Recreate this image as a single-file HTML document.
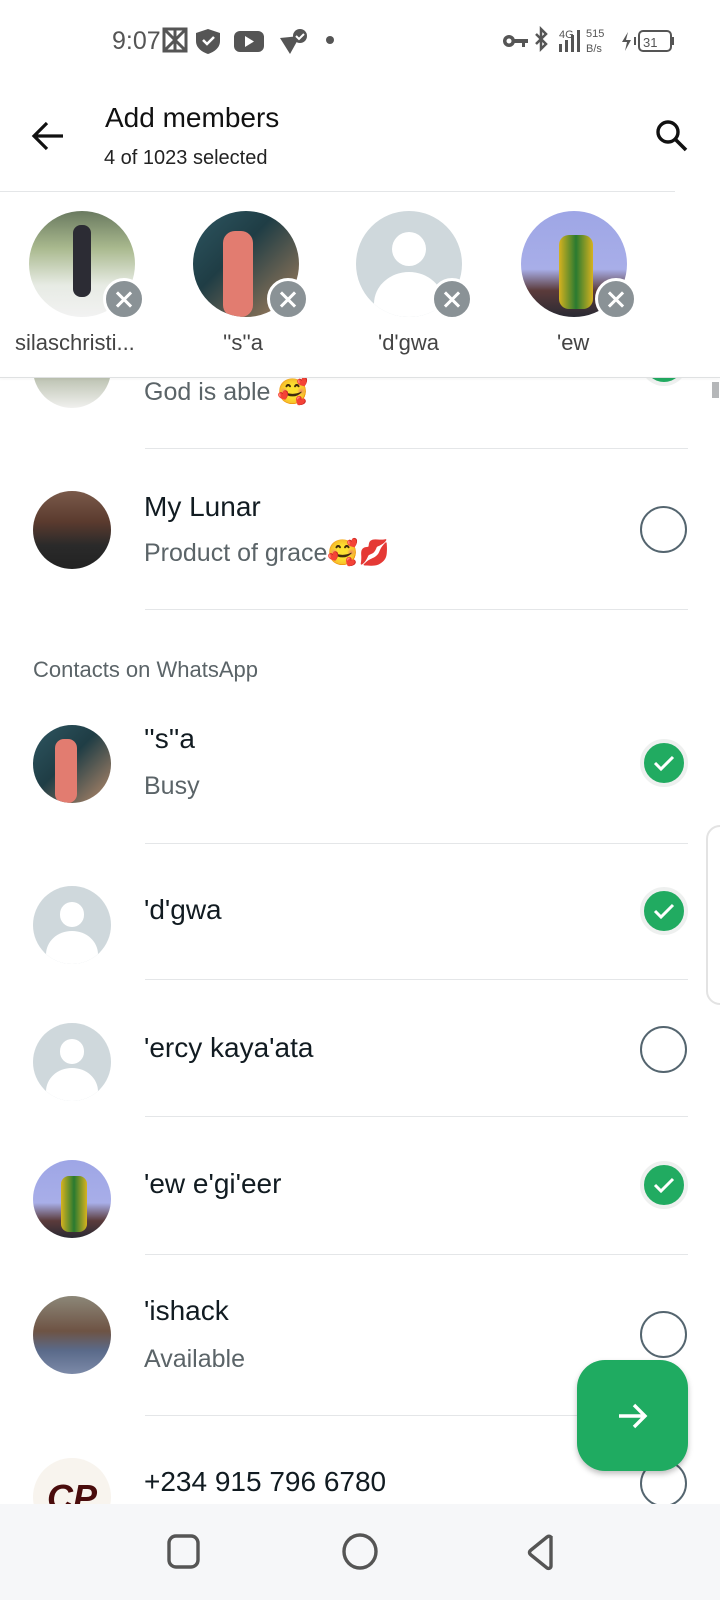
<!DOCTYPE html>
<html><head><meta charset="utf-8"><style>
*{margin:0;padding:0;box-sizing:border-box}
body{width:720px;height:1600px;background:#fff;position:relative;overflow:hidden;font-family:"Liberation Sans",sans-serif;color:#111b21}
.a{position:absolute}
.t{position:absolute;white-space:nowrap;line-height:1}
.av{position:absolute;border-radius:50%;overflow:hidden}
.def{background:#cfd8dc}
.def:before{content:"";position:absolute;left:34%;top:20%;width:32%;height:32%;border-radius:50%;background:#fff}
.def:after{content:"";position:absolute;left:17%;top:58%;width:66%;height:60%;border-radius:50% 50% 0 0;background:#fff}
.rm{position:absolute;width:42px;height:42px;border-radius:50%;background:#8a9296;border:3px solid #fff}
.rm:before,.rm:after{content:"";position:absolute;left:8px;top:16.5px;width:20px;height:3px;background:#fff;transform:rotate(45deg)}
.rm:after{transform:rotate(-45deg)}
.hr{position:absolute;height:1px;background:#e4e6e8}
.nm{font-size:28px;color:#111b21}
.st{font-size:25px;color:#5b6468}
.rc{position:absolute;width:47px;height:47px;border-radius:50%;border:2px solid #54656f}
.ck{position:absolute;width:48px;height:48px;border-radius:50%;background:#21ab61;border:4px solid #eef0ef}
.ck svg{position:absolute;left:7px;top:7px}
</style></head><body>
<!-- list row partially under header -->
<div class="av" style="left:33px;top:340px;width:78px;height:68px;border-radius:0 0 39px 39px;background:linear-gradient(180deg,#7c8a67,#f0f0ee)"></div>
<div class="t st" style="left:144px;top:380px">God is able 🥰</div>
<div class="ck" style="left:640px;top:338px"></div>
<div class="a" style="left:0;top:192px;width:720px;height:185px;background:#fff"></div>
<div class="a" style="left:0;top:377px;width:720px;height:1px;background:#dfe1e2;box-shadow:0 1px 2px rgba(0,0,0,.08)"></div>
<div class="a" style="left:712px;top:382px;width:7px;height:16px;background:#b5b7b9"></div>

<!-- status bar -->
<div class="t" style="left:112px;top:29px;font-size:25px;color:#555">9:07</div>
<svg class="a" style="left:162px;top:26px" width="200" height="30" viewBox="0 0 200 30"><g fill="none" stroke="#555" stroke-width="3"><path d="M2 3h22v22H2z M2 3l22 22 M24 3L2 25 M13 3v22"/></g><path d="M46 3l12 4v8c0 7-6 11-12 13-6-2-12-6-12-13V7z" fill="#555"/><path d="M41 14l4 4 7-7" stroke="#fff" stroke-width="2.5" fill="none"/><rect x="72" y="5" width="30" height="21" rx="6" fill="#555"/><path d="M83 10v11l9-5.5z" fill="#fff"/><path d="M118 12l20-2-10 18z" fill="#555"/><circle cx="138" cy="10" r="7" fill="#555"/><path d="M134 10l3 3 5-5" stroke="#fff" stroke-width="2" fill="none"/><circle cx="168" cy="14" r="4" fill="#555"/></svg>
<svg class="a" style="left:502px;top:26px" width="200" height="30" viewBox="0 0 200 30"><g fill="#555"><circle cx="7" cy="15" r="6"/><rect x="10" y="13" width="16" height="4"/><rect x="20" y="13" width="3" height="8"/></g><circle cx="7" cy="15" r="2.5" fill="#fff"/><path d="M34 8l10 10-5 5V3l5 5-10 10" stroke="#555" stroke-width="2.5" fill="none"/><text x="57" y="12" font-size="11" fill="#555" font-family="Liberation Sans">4G</text><g fill="#555"><rect x="57" y="18" width="3" height="8"/><rect x="63" y="14" width="3" height="12"/><rect x="69" y="9" width="3" height="17"/><rect x="75" y="4" width="3" height="22"/></g><text x="84" y="11" font-size="11" fill="#555" font-family="Liberation Sans">515</text><text x="84" y="26" font-size="11" fill="#555" font-family="Liberation Sans">B/s</text><path d="M126 6l-6 10h5l-2 9 6-11h-5z" fill="#555"/><rect x="132" y="11" width="2" height="8" fill="#555"/><rect x="137" y="5" width="32" height="20" rx="4" fill="none" stroke="#555" stroke-width="2"/><text x="141" y="21" font-size="13" fill="#555" font-family="Liberation Sans">31</text><rect x="170" y="11" width="2" height="8" fill="#555"/></svg>
<!-- toolbar -->
<svg class="a" style="left:30px;top:120px" width="36" height="32" viewBox="0 0 36 32"><path d="M33 16H4M17 3L4 16l13 13" stroke="#111" stroke-width="3.2" fill="none"/></svg>
<div class="t" style="left:105px;top:104px;font-size:28px;color:#111">Add members</div>
<div class="t" style="left:104px;top:148px;font-size:20px;color:#222">4 of 1023 selected</div>
<svg class="a" style="left:654px;top:118px" width="36" height="36" viewBox="0 0 36 36"><circle cx="14" cy="14" r="10" stroke="#111" stroke-width="3.4" fill="none"/><path d="M21.5 21.5L32 32" stroke="#111" stroke-width="3.6"/></svg>
<div class="hr" style="left:0;top:191px;width:675px"></div>
<!-- selected -->
<div class="av" style="left:29px;top:211px;width:106px;height:106px;background:linear-gradient(180deg,#6a7a60 0%,#a9b98e 35%,#e7ebe4 70%,#f2f2f2 100%)"><div class="a" style="left:44px;top:14px;width:18px;height:72px;background:#2c2c34;border-radius:8px"></div></div>
<div class="rm" style="left:103px;top:278px"></div>
<div class="av" style="left:193px;top:211px;width:106px;height:106px;background:linear-gradient(135deg,#2e5661 0%,#1f3d45 40%,#7a6a55 80%,#b98b6b 100%)"><div class="a" style="left:30px;top:20px;width:30px;height:86px;background:#e27c70;border-radius:12px"></div></div>
<div class="rm" style="left:267px;top:278px"></div>
<div class="av def" style="left:356px;top:211px;width:106px;height:106px"></div>
<div class="rm" style="left:431px;top:278px"></div>
<div class="av" style="left:521px;top:211px;width:106px;height:106px;background:linear-gradient(180deg,#9ea6e6 0%,#a8aee8 55%,#5b3b3b 75%,#2a2a33 100%)"><div class="a" style="left:38px;top:24px;width:34px;height:74px;background:linear-gradient(90deg,#d6b21f,#2a7a30,#d6b21f);border-radius:10px"></div></div>
<div class="rm" style="left:595px;top:278px"></div>
<div class="t" style="left:15px;top:332px;font-size:22px;color:#444">silaschristi...</div>
<div class="t" style="left:223px;top:332px;font-size:22px;color:#444">''s''a</div>
<div class="t" style="left:378px;top:332px;font-size:22px;color:#444">'d'gwa</div>
<div class="t" style="left:557px;top:332px;font-size:22px;color:#444">'ew</div>

<div class="hr" style="left:145px;top:448px;width:543px"></div>

<div class="av" style="left:33px;top:491px;width:78px;height:78px;background:linear-gradient(180deg,#7a5a4a 0%,#5a3a2e 40%,#2a2a2a 70%,#222 100%)"></div>
<div class="t nm" style="left:144px;top:493px">My Lunar</div>
<div class="t st" style="left:144px;top:541px">Product of grace🥰💋</div>
<div class="rc" style="left:640px;top:506px"></div>
<div class="hr" style="left:145px;top:609px;width:543px"></div>

<div class="t" style="left:33px;top:659px;font-size:22px;color:#5b6468">Contacts on WhatsApp</div>

<div class="av" style="left:33px;top:725px;width:78px;height:78px;background:linear-gradient(135deg,#2e5661 0%,#1f3d45 45%,#b98b6b 100%)"><div class="a" style="left:22px;top:14px;width:22px;height:64px;background:#e27c70;border-radius:9px"></div></div>
<div class="t nm" style="left:144px;top:725px">''s''a</div>
<div class="t st" style="left:144px;top:774px">Busy</div>
<div class="ck" style="left:640px;top:739px"><svg width="26" height="26" viewBox="0 0 26 26"><path d="M4 13l6 6 12-12" stroke="#fff" stroke-width="3" fill="none"/></svg></div>
<div class="hr" style="left:145px;top:843px;width:543px"></div>

<div class="av def" style="left:33px;top:886px;width:78px;height:78px"></div>
<div class="t nm" style="left:144px;top:896px">'d'gwa</div>
<div class="ck" style="left:640px;top:887px"><svg width="26" height="26" viewBox="0 0 26 26"><path d="M4 13l6 6 12-12" stroke="#fff" stroke-width="3" fill="none"/></svg></div>
<div class="hr" style="left:145px;top:979px;width:543px"></div>
<div class="a" style="left:706px;top:825px;width:30px;height:180px;border:2px solid #e3e3e3;border-radius:14px;background:#fff"></div>

<div class="av def" style="left:33px;top:1023px;width:78px;height:78px"></div>
<div class="t nm" style="left:144px;top:1034px">'ercy kaya'ata</div>
<div class="rc" style="left:640px;top:1026px"></div>
<div class="hr" style="left:145px;top:1116px;width:543px"></div>

<div class="av" style="left:33px;top:1160px;width:78px;height:78px;background:linear-gradient(180deg,#9ea6e6 0%,#a8aee8 55%,#5b3b3b 78%,#2a2a33 100%)"><div class="a" style="left:28px;top:16px;width:26px;height:56px;background:linear-gradient(90deg,#d6b21f,#2a7a30,#d6b21f);border-radius:8px"></div></div>
<div class="t nm" style="left:144px;top:1170px">'ew e'gi'eer</div>
<div class="ck" style="left:640px;top:1161px"><svg width="26" height="26" viewBox="0 0 26 26"><path d="M4 13l6 6 12-12" stroke="#fff" stroke-width="3" fill="none"/></svg></div>
<div class="hr" style="left:145px;top:1254px;width:543px"></div>

<div class="av" style="left:33px;top:1296px;width:78px;height:78px;background:linear-gradient(180deg,#8c8778 0%,#6e5344 45%,#5a6a8a 70%,#7c8aa8 100%)"></div>
<div class="t nm" style="left:144px;top:1297px">'ishack</div>
<div class="t st" style="left:144px;top:1347px">Available</div>
<div class="rc" style="left:640px;top:1311px"></div>
<div class="hr" style="left:145px;top:1415px;width:432px"></div>

<div class="av" style="left:33px;top:1458px;width:78px;height:78px;background:#f8f4ee"><div class="t" style="left:14px;top:22px;font-size:36px;font-style:italic;font-weight:bold;color:#4a0c0c">CP</div></div>
<div class="t nm" style="left:144px;top:1468px">+234 915 796 6780</div>
<div class="rc" style="left:640px;top:1460px"></div>

<div class="a" style="left:577px;top:1360px;width:111px;height:111px;border-radius:28px;background:#1fab61;box-shadow:0 3px 6px rgba(0,0,0,.25)"><svg class="a" style="left:38px;top:38px" width="36" height="36" viewBox="0 0 36 36"><path d="M4 18h26M19 7l11 11-11 11" stroke="#fff" stroke-width="3.4" fill="none"/></svg></div>
<!-- nav -->
<div class="a" style="left:0;top:1504px;width:720px;height:96px;background:#f6f7f9"></div>
<svg class="a" style="left:160px;top:1530px" width="410" height="44" viewBox="0 0 410 44"><rect x="9" y="6" width="29" height="31" rx="7" fill="none" stroke="#555" stroke-width="3.4"/><ellipse cx="200" cy="21.5" rx="16" ry="16.5" fill="none" stroke="#555" stroke-width="3.4"/><path d="M391 6v30c0 2-2 3-4 2l-16-13c-2-1.5-2-3.5 0-5l16-13c2-1.5 4-.5 4 1z" fill="none" stroke="#555" stroke-width="3.4"/></svg>
</body></html>
